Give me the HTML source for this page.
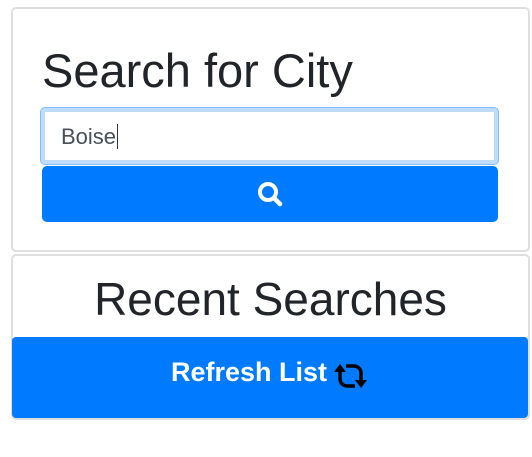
<!DOCTYPE html>
<html><head><style>
body{margin:0;background:#fff;font-family:"Liberation Sans",sans-serif;width:532px;height:457px;position:relative;overflow:hidden}
.card{position:absolute;border:2px solid #dfdfdf;border-radius:5px;box-sizing:border-box;background:#fff}
h1{position:absolute;margin:0;font-weight:normal;color:#212529;line-height:1}
.inp{position:absolute;left:40px;top:107px;width:459px;height:58px;box-sizing:border-box;border:1px solid #80bdff;box-shadow:0 0 0 4px #c0dcfc inset;border-radius:5px;background:#fff}
.inp span{position:absolute;left:20px;top:16px;font-size:22px;color:#495057}
.btn{position:absolute;background:#007bff;border-radius:5px}
</style></head><body>
<div class="card" style="left:11px;top:7px;width:519px;height:245px"></div>
<h1 style="left:42px;top:47px;font-size:47px">Search for City</h1>
<div class="inp"><span>Boise<span style="position:static;border-left:1px solid #333;margin-left:1px"></span></span></div>
<div class="btn" style="left:42px;top:166px;width:456px;height:56px">
<svg style="position:absolute;left:215px;top:15px" width="26" height="26" viewBox="0 0 26 26"><circle cx="11" cy="11" r="8" fill="none" stroke="#fff" stroke-width="4"/><line x1="17" y1="17" x2="23" y2="23" stroke="#fff" stroke-width="4.5" stroke-linecap="round"/></svg></div>
<div class="card" style="left:11px;top:254px;width:519px;height:166px"></div>
<h1 style="left:0;width:541px;text-align:center;top:276px;font-size:46px">Recent Searches</h1>
<div class="btn" style="left:12px;top:337px;width:516px;height:81px;border-radius:4px">
<span style="position:absolute;left:159px;top:20px;color:#fff;font-size:27px;font-weight:bold">Refresh List</span>
<svg style="position:absolute;left:321px;top:22px" width="36" height="34" viewBox="0 0 36 34"><path d="M7 12 V20 A7 7 0 0 0 14 27 H22" fill="none" stroke="#000" stroke-width="3.5"/><path d="M1 13 L7 5 L13 13 Z" fill="#000"/><path d="M28 22 V14 A7 7 0 0 0 21 7 H13" fill="none" stroke="#000" stroke-width="3.5"/><path d="M22 21 L28 29 L34 21 Z" fill="#000"/></svg></div>
</body></html>
